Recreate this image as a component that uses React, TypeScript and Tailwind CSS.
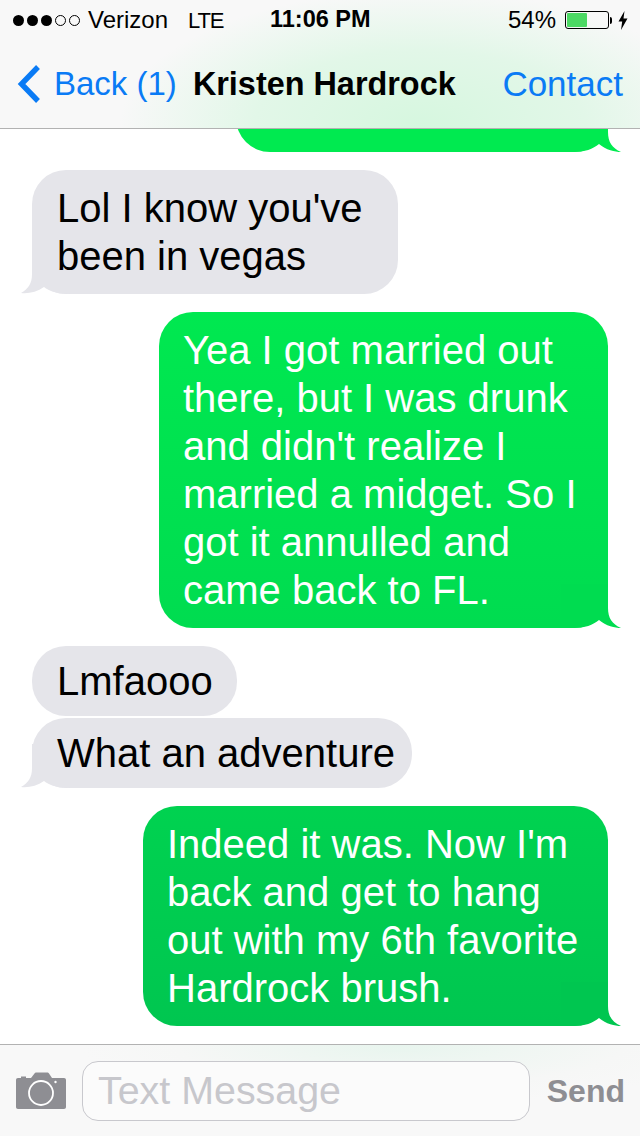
function TailR({ fill }: { fill: string }) {
  return (
    <svg className="absolute right-[-13px] bottom-0" width="60" height="44" viewBox="0 0 60 44">
      <path d="M47 0 L47 24 C47 34 51 40 60 44 C54 44 45 42 38 36 C32 41 24 44 12 44 L0 44 L0 0 Z" fill={fill} />
    </svg>
  );
}

function TailL() {
  return (
    <svg className="absolute left-[-11px] bottom-0" width="50" height="44" viewBox="0 0 50 44">
      <path d="M11 0 L11 24 C11 34 7 39 0 43 C7 44 16 42 23 37 C28 41 36 44 50 44 L50 0 Z" fill="#e5e5ea" />
    </svg>
  );
}

function Out({ lines, w, fill, bg }: { lines: string[]; w: string; fill: string; bg: string }) {
  return (
    <div className={`relative self-end mr-[32px] ${w} ${bg} rounded-[34px] px-[24px] py-[14px] text-white text-[40px] leading-[48px]`}>
      <TailR fill={fill} />
      {lines.map((l) => (
        <div key={l} className="relative whitespace-nowrap">{l}</div>
      ))}
    </div>
  );
}

function In({ lines, w, tail, py }: { lines: string[]; w: string; tail?: boolean; py: string }) {
  return (
    <div className={`relative self-start ml-[32px] ${w} ${py} bg-[#e5e5ea] rounded-[34px] px-[25px] text-black text-[40px] leading-[48px]`}>
      {tail && <TailL />}
      {lines.map((l) => (
        <div key={l} className="relative whitespace-nowrap">{l}</div>
      ))}
    </div>
  );
}

export default function App() {
  return (
    <div className="w-[640px] h-[1136px] overflow-hidden bg-white flex flex-col font-['Liberation_Sans',Arial,sans-serif]">
      <header className="h-[129px] shrink-0 z-10 border-b border-[#b2b2b2] bg-[radial-gradient(ellipse_300px_135px_at_420px_125px,#d6f7df_0%,#e2f7e8_55%,#f8f8f8_100%)]">
        <div className="h-[40px] flex items-center text-black text-[24px]">
          <div className="w-[270px] pl-[13px] flex items-center">
            <div className="flex items-center gap-[3px]">
              <span className="w-[11px] h-[11px] rounded-full bg-black" />
              <span className="w-[11px] h-[11px] rounded-full bg-black" />
              <span className="w-[11px] h-[11px] rounded-full bg-black" />
              <span className="w-[11px] h-[11px] rounded-full border border-black" />
              <span className="w-[11px] h-[11px] rounded-full border border-black" />
            </div>
            <span className="ml-[8px]">Verizon</span>
            <span className="ml-[20px] text-[22px] tracking-[-1.2px]">LTE</span>
          </div>
          <div className="w-[100px] font-bold whitespace-nowrap text-[23.5px]">11:06 PM</div>
          <div className="flex-1 flex items-center justify-end pr-[12px]">
            <span>54%</span>
            <div className="ml-[9px] w-[44px] h-[18px] rounded-[3px] border border-black p-[1px]">
              <div className="w-[20px] h-full bg-[#4cd964] rounded-[1px]" />
            </div>
            <div className="ml-[1px] w-[2px] h-[7px] bg-black rounded-r-[2px]" />
            <svg className="ml-[6px]" width="10" height="19" viewBox="0 0 10 19">
              <path d="M6.5 0 L0.5 10.5 L4.2 10.5 L3 19 L9.5 7.5 L5.5 7.5 Z" fill="#000" />
            </svg>
          </div>
        </div>
        <div className="h-[88px] flex items-center pr-[17px]">
          <svg className="ml-[17px]" width="25" height="40" viewBox="0 0 25 40">
            <path d="M21 3 L4.5 20 L21 37" fill="none" stroke="#0a7bf5" strokeWidth="5.4" />
          </svg>
          <span className="ml-[12px] text-[33px] text-[#0a7bf5] whitespace-nowrap">Back (1)</span>
          <span className="ml-[16px] text-[32.4px] font-bold text-black whitespace-nowrap">Kristen Hardrock</span>
          <span className="ml-auto text-[35px] text-[#0a7bf5]">Contact</span>
        </div>
      </header>

      <main className="flex-1 min-h-0 overflow-hidden flex flex-col gap-[18px]">
        <Out lines={[""]} w="w-[372px] h-[100px] mt-[-77px]" fill="#00ea50" bg="bg-[#00ea50]" />
        <In tail w="w-[366px]" py="py-[14px]" lines={["Lol I know you've", "been in vegas"]} />
        <Out w="w-[449px]" fill="#00dc50" bg="bg-[linear-gradient(#00e850,#00dc50)]"
          lines={["Yea I got married out", "there, but I was drunk", "and didn't realize I", "married a midget. So I", "got it annulled and", "came back to FL."]} />
        <div className="flex flex-col gap-[2px]">
          <In w="w-[205px]" py="py-[11px]" lines={["Lmfaooo"]} />
          <In tail w="w-[380px]" py="py-[11px]" lines={["What an adventure"]} />
        </div>
        <Out w="w-[465px]" fill="#00c650" bg="bg-[linear-gradient(#00d250,#00c650)]"
          lines={["Indeed it was. Now I'm", "back and get to hang", "out with my 6th favorite", "Hardrock brush."]} />
      </main>

      <footer className="h-[92px] shrink-0 border-t border-[#b2b2b2] flex items-center pl-[16px] pr-[15px] bg-[radial-gradient(ellipse_320px_60px_at_400px_0px,#e8f5ee_0%,#f6f7f6_70%,#f8f8f8_100%)]">
        <svg width="50" height="37" viewBox="0 0 50 37">
          <path d="M2 6 H5 V4.5 H10 V6 H15 L18.5 1.5 C19 0.8 19.5 0.5 20.5 0.5 H31 C32 0.5 32.5 0.8 33 1.5 L36 6 H48 C49.2 6 50 6.8 50 8 V35 C50 36.2 49.2 37 48 37 H2 C0.8 37 0 36.2 0 35 V8 C0 6.8 0.8 6 2 6 Z" fill="#8e8e93" />
          <circle cx="25" cy="21" r="12" fill="none" stroke="#fff" strokeWidth="1.8" />
          <rect x="5" y="2.5" width="5" height="1.5" fill="#f8f8f8" />
          <circle cx="39.5" cy="10" r="1.2" fill="#fff" />
        </svg>
        <div className="ml-[16px] w-[448px] h-[60px] rounded-[16px] border border-[#c8c8cd] bg-[#fbfbfb] flex items-center pl-[15px] text-[39.4px] text-[#c7c7cc]">
          Text Message
        </div>
        <span className="ml-auto text-[32px] font-bold text-[#8e8e93]">Send</span>
      </footer>
    </div>
  );
}
